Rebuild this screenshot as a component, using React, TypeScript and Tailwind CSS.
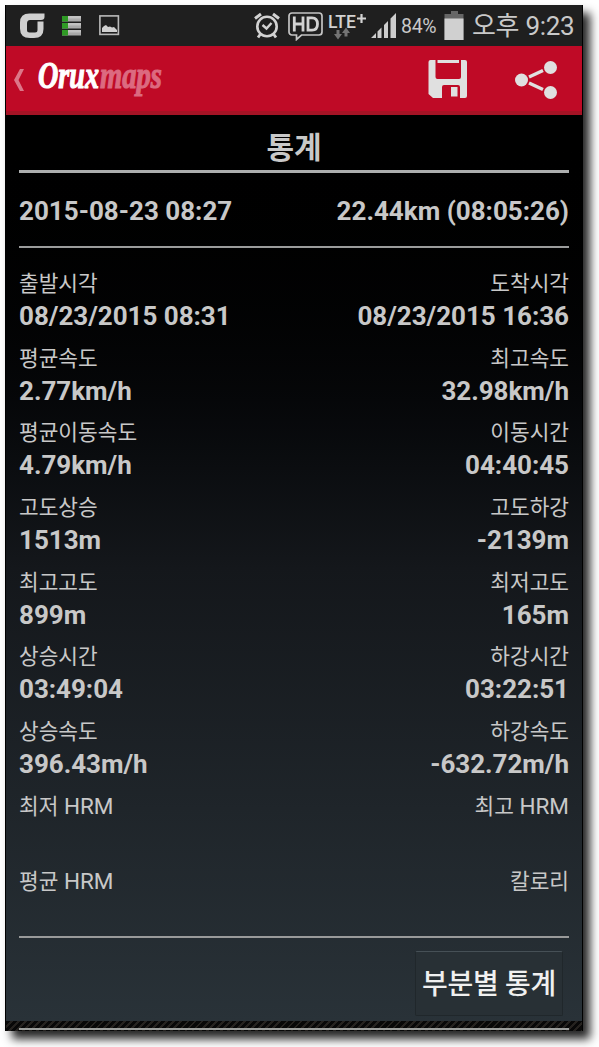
import React from 'react';

interface Stat {
  label: string;
  unit?: string;
  value?: string;
}

const rows: [Stat, Stat][] = [
  [{ label: '출발시각', value: '08/23/2015 08:31' }, { label: '도착시각', value: '08/23/2015 16:36' }],
  [{ label: '평균속도', value: '2.77km/h' }, { label: '최고속도', value: '32.98km/h' }],
  [{ label: '평균이동속도', value: '4.79km/h' }, { label: '이동시간', value: '04:40:45' }],
  [{ label: '고도상승', value: '1513m' }, { label: '고도하강', value: '-2139m' }],
  [{ label: '최고고도', value: '899m' }, { label: '최저고도', value: '165m' }],
  [{ label: '상승시간', value: '03:49:04' }, { label: '하강시간', value: '03:22:51' }],
  [{ label: '상승속도', value: '396.43m/h' }, { label: '하강속도', value: '-632.72m/h' }],
  [{ label: '최저', unit: 'HRM' }, { label: '최고', unit: 'HRM' }],
  [{ label: '평균', unit: 'HRM' }, { label: '칼로리' }],
];

const CarrierIcon = () => (
  <svg width="26" height="26" viewBox="0 0 26 26" className="ml-[14px]">
    <path d="M24.500 0.500H9.500Q0 0.500 0 9.500v6Q0 25 10 25h4Q23.500 25 23.500 16V8.500H17.500V17q0 2.500-2.500 2.500H9.500Q7 19.500 7 17v-6.500Q7 7 10 7h11q3.500 0 3.500-3z" fill="#cfcfcf" />
  </svg>
);

const ListIcon = () => (
  <svg width="20" height="20" viewBox="0 0 20 20" className="ml-4">
    {[0, 7, 14].map((y) => (
      <g key={y}>
        <rect x="0" y={y} width="19" height="5.500" fill="#a9a9a9" />
        <rect x="6" y={y} width="13" height="2.500" fill="#c2c2c2" />
        <rect x="0" y={y} width="6" height="5.500" fill="#2f9a25" />
      </g>
    ))}
  </svg>
);

const PictureIcon = () => (
  <svg width="21" height="21" viewBox="0 0 21 21" className="ml-[17px]">
    <rect x="0.900" y="0.900" width="18.500" height="18.500" fill="none" stroke="#b9b9b9" strokeWidth="1.600" />
    <path d="M3 17v-4l2-2 2-1 2 2 2-.5 2 1 2-.5 3 3v2z" fill="#d0d0d0" />
  </svg>
);

const AlarmIcon = () => (
  <svg width="26" height="27" viewBox="0 0 26 27" fill="none" stroke="#d2d2d2">
    <circle cx="13" cy="14.500" r="9.700" strokeWidth="2.600" />
    <path d="M8.500 13l4 3.500 5-5.500" strokeWidth="2.400" />
    <path d="M1 6.500L7 2M25 6.500L19 2" strokeWidth="3" />
    <path d="M6.500 22L4 25.500M19.500 22L22 25.500" strokeWidth="2.800" />
  </svg>
);

const HdIcon = () => (
  <svg width="36" height="30" viewBox="0 0 36 30" className="ml-2">
    <path d="M4 2h27a3 3 0 0 1 3 3v16a3 3 0 0 1-3 3H13.500L8.500 28.500V24H4a3 3 0 0 1-3-3V5a3 3 0 0 1 3-3z" fill="none" stroke="#c4c4c4" strokeWidth="1.700" />
    <path d="M6.300 5.500v15M15 5.500v15M6.300 13H15" fill="none" stroke="#d2d2d2" strokeWidth="2.800" />
    <path d="M20 6.900v12.200h4c4 0 5.500-2.200 5.500-6.100s-1.500-6.100-5.500-6.100z" fill="none" stroke="#d2d2d2" strokeWidth="2.800" />
  </svg>
);

const LteIcon = () => (
  <svg width="40" height="30" viewBox="0 0 40 30" className="ml-1 overflow-visible">
    <text x="0" y="16.500" textLength="28" lengthAdjust="spacingAndGlyphs" fill="#d2d2d2" fontFamily="Roboto" fontSize="19" fontWeight="500">LTE</text>
    <path d="M33.500 3v9M29 7.500h9" stroke="#d2d2d2" strokeWidth="2.200" />
    <path d="M8.500 19h3v4h2.500l-4 5.500L6 23h2.500zM16.500 25.500V22H14l4-5.500 4 5.500h-2.500v3.500z" fill="#747474" />
  </svg>
);

const SignalIcon = () => (
  <svg width="27" height="27" viewBox="0 0 27 27" fill="#cdcdcd" className="ml-[2px]">
    <path d="M1 26l5-5v5zM7.500 19.500l4-4V26h-4zM14 13l4-4v17h-4zM20.500 6.500L26 1v25h-5.500z" />
  </svg>
);

const BatteryIcon = () => (
  <svg width="20" height="30" viewBox="0 0 20 30" className="ml-2">
    <path d="M7 0h7v3h5.500v26H.5V3H7z" fill="#666" />
    <rect x="0.500" y="7.500" width="19" height="21.500" fill="#d0d0d0" />
  </svg>
);

const StatusBar = () => (
  <div className="flex h-[41px] items-center bg-[#1f1f1f] pr-[8px] text-[#c9c9c9]">
    <CarrierIcon />
    <ListIcon />
    <PictureIcon />
    <div className="ml-auto flex items-center">
      <AlarmIcon />
      <HdIcon />
      <LteIcon />
      <SignalIcon />
      <span className="ml-[4px] w-[35px] whitespace-nowrap pt-[2px] text-[19.500px] leading-none tracking-[-0.3px]">84%</span>
      <BatteryIcon />
      <span className="ml-[8px] w-[102px] whitespace-nowrap text-[26px] leading-none tracking-[-0.3px]">오후 9:23</span>
    </div>
  </div>
);

const Logo = () => (
  <svg width="134" height="50" viewBox="0 0 134 50" fontFamily="Liberation Serif" fontWeight="700" fontStyle="italic" fontSize="37" strokeWidth="1.100" className="ml-[11px] overflow-visible">
    <text x="2" y="34" textLength="61" lengthAdjust="spacingAndGlyphs" fill="#fff" stroke="#fff">Orux</text>
    <text x="64" y="34" textLength="62" lengthAdjust="spacingAndGlyphs" fill="#dc6a80" stroke="#dc6a80">maps</text>
  </svg>
);

const ActionBar = () => (
  <div className="flex h-[69px] items-center border-b-4 border-[#a51325] bg-[#bf0a26] pr-[24px]">
    <svg width="12" height="24" viewBox="0 0 12 24" className="ml-[7px] mt-0.5">
      <path d="M7 1h4L5.500 12 11 23H7L1 12z" fill="#dc7788" />
    </svg>
    <Logo />
    <svg width="40" height="40" viewBox="0 0 40 40" fill="#e0e0e0" className="ml-auto mt-px">
      <path fillRule="evenodd" d="M2.500 1h34.500q2 0 2 2v34q0 2-2 2h-5V28q0-2-2-2H16q-2 0-2 2v11H5l-4.500-4V3q0-2 2-2zM7.500 1v17q0 2 2 2h21.500q2 0 2-2V1h-2v3h-21.500V1z" />
      <rect x="23" y="28" width="6.500" height="9.500" />
    </svg>
    <svg width="44" height="40" viewBox="0 0 44 40" fill="#e0e0e0" className="ml-[46px] mt-0.5">
      <path d="M15 17L29 10.500M15 23L29 29.500" stroke="#e0e0e0" strokeWidth="3.500" />
      <circle cx="7.500" cy="20" r="6.500" />
      <circle cx="36.500" cy="7.500" r="6.500" />
      <circle cx="36.500" cy="32.500" r="6.500" />
    </svg>
  </div>
);

const StatCell = ({ label, unit, value }: Stat) => (
  <div>
    <div className="h-[33px] pt-px text-[21.400px] leading-[33px]">
      {label}
      {unit && <span className="text-[22.500px]"> {unit}</span>}
    </div>
    <div className="h-[34px] text-[26px] font-bold leading-[34px] tracking-[-0.03px]">{value}</div>
  </div>
);

const App: React.FC = () => {
  return (
    <div className="h-[1047px] w-[599px] overflow-hidden bg-white pl-[5px] pt-[5px] font-['Roboto','Noto_Sans_CJK_KR',sans-serif]">
      <div className="flex h-[1026px] w-[578px] flex-col border-x border-black bg-black shadow-[7px_8px_9px_rgba(0,0,0,0.85)]">
        <StatusBar />
        <ActionBar />
        <div className="h-[906px] bg-linear-to-b from-black via-[#14171b] to-[#293238] px-[13px] text-[#c8c8c8]">
          <h1 className="h-[55px] pt-[10px] text-center text-[30px] font-bold leading-[46px]">통계</h1>
          <div className="h-[3px] bg-[#adafaf]" />
          <div className="flex h-[73px] items-center justify-between pt-[3px] text-[26px] font-bold">
            <span>2015-08-23 08:27</span>
            <span>22.44km (08:05:26)</span>
          </div>
          <div className="h-[2px] bg-[#9b9c9c]" />
          <div className="flex h-[688px] flex-col pt-[18px]">
            {rows.map(([left, right], i) => (
              <div key={i} className="flex h-[74.700px] shrink-0 justify-between">
                <StatCell {...left} />
                <div className="text-right">
                  <StatCell {...right} />
                </div>
              </div>
            ))}
          </div>
          <div className="h-[2px] bg-[#999a9a]" />
          <div className="flex justify-end pr-[6px] pt-[13px]">
            <button className="h-[65px] w-[148px] whitespace-nowrap rounded-xs border border-[#20272b] border-t-[#465056] bg-[#283035] pt-0.5 text-[28px] font-medium tracking-[-0.3px] text-[#f0f0f0]">
              부분별 통계
            </button>
          </div>
        </div>
        <div className="flex-1 bg-[repeating-linear-gradient(135deg,#080808_0px,#080808_3px,#25221f_3px,#25221f_5px)] px-[13px] pt-[7px]">
          <div className="h-[2px] bg-[#9c9e9c]" />
        </div>
      </div>
    </div>
  );
};

export default App;
